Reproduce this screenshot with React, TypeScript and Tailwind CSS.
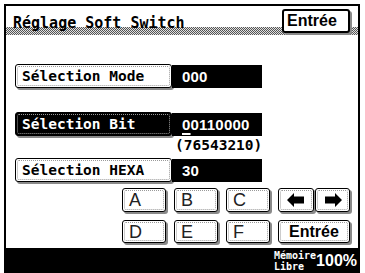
import type { ReactNode } from 'react';
import clsx from 'clsx';

const mono = "font-['DejaVu_Sans_Mono','Liberation_Mono',monospace]";
const sans = "font-['Liberation_Sans',Arial,sans-serif]";

interface KeyProps {
  children?: ReactNode;
  className?: string;
  dark?: boolean;
  inner?: string;
}

// panel key: black outline, dotted inner edge, grey drop shadow
function Key({ children, className, dark, inner }: KeyProps) {
  return (
    <div
      className={clsx(
        'border border-black rounded-[3px] shadow-[2px_2px_0_#8a8a8a] p-[1px] shrink-0',
        dark ? 'bg-black text-white' : 'bg-white text-black',
        className
      )}
    >
      <div
        className={clsx(
          'h-full w-full border border-dotted border-[#9a9a9a] rounded-[2px] flex items-center',
          inner
        )}
      >
        {children}
      </div>
    </div>
  );
}

function Arrow({ dir }: { dir: 'left' | 'right' }) {
  return (
    <svg width="18" height="14" viewBox="0 0 18 14">
      {dir === 'left' ? (
        <polygon points="0,7 7,0 7,3.5 17,3.5 17,10.5 7,10.5 7,14" fill="#000" />
      ) : (
        <polygon points="18,7 11,0 11,3.5 1,3.5 1,10.5 11,10.5 11,14" fill="#000" />
      )}
    </svg>
  );
}

function Row({ label, value, dark }: { label: string; value: ReactNode; dark?: boolean }) {
  return (
    <div className="flex items-center h-[24px]">
      <Key dark={dark} className="w-[157px] h-[24px]" inner="pl-[4px]">
        <span className={clsx(mono, 'text-[14.5px] font-bold leading-none')}>{label}</span>
      </Key>
      <div className="w-[90px] h-[23px] bg-black text-white flex items-center pl-[10px]">
        <span className={clsx(sans, 'text-[15px] font-bold leading-none tracking-[0.2px]')}>{value}</span>
      </div>
    </div>
  );
}

export default function App() {
  return (
    <div className="w-[365px] h-[273px] bg-white overflow-hidden">
      <div className="ml-[4px] pt-[4px] w-[356px] h-[273px] flex flex-col">
        <div className="h-[269px] border-t-2 border-x-2 border-black flex flex-col">
          {/* Header */}
          <div className="relative h-[21px] pl-[7px] pt-[4px]">
            <span className={clsx(mono, 'text-[15px] font-bold leading-none text-black')}>
              Réglage Soft Switch
            </span>
            <div className="absolute right-[8px] top-[3px] z-10 w-[68px] h-[24px] bg-white border-2 border-black rounded-[3px] shadow-[2px_2px_0_#8a8a8a] flex items-center pl-[3px]">
              <span className={clsx(sans, 'text-[16px] font-bold leading-none')}>Entrée</span>
            </div>
          </div>
          <div className="h-[8px] bg-[repeating-conic-gradient(#555_0_25%,#e0e0e0_0_50%)] bg-[length:2px_2px]" />

          {/* Rows */}
          <div className="pl-[9px] mt-[29px] flex flex-col">
            <Row label="Sélection Mode" value="000" />
            <div className="mt-[24px]">
              <Row
                dark
                label="Sélection Bit"
                value={
                  <>
                    <span className="underline decoration-2 underline-offset-[3px]">0</span>0110000
                  </>
                }
              />
            </div>
            <div className={clsx(mono, 'mt-[2px] ml-[160px] h-[14px] text-[14.5px] font-bold leading-none')}>
              (76543210)
            </div>
            <div className="mt-[6px]">
              <Row label="Sélection HEXA" value="30" />
            </div>

            {/* Keypad */}
            <div className="ml-[107px] mt-[6px] flex gap-[8px]">
              {['A', 'B', 'C'].map((k) => (
                <Key key={k} className="w-[44px] h-[24px]" inner="pl-[4px]">
                  <span className={clsx(sans, 'text-[18px] leading-none text-[#222]')}>{k}</span>
                </Key>
              ))}
              <div className="flex gap-[1px]">
                <Key className="w-[36px] h-[24px]" inner="justify-center">
                  <Arrow dir="left" />
                </Key>
                <Key className="w-[35px] h-[24px]" inner="justify-center">
                  <Arrow dir="right" />
                </Key>
              </div>
            </div>
            <div className="ml-[107px] mt-[8px] flex gap-[8px]">
              {['D', 'E', 'F'].map((k) => (
                <Key key={k} className="w-[44px] h-[23px]" inner="pl-[4px]">
                  <span className={clsx(sans, 'text-[18px] leading-none text-[#222]')}>{k}</span>
                </Key>
              ))}
              <Key className="w-[72px] h-[23px]" inner="justify-center">
                <span className={clsx(sans, 'text-[16px] font-bold leading-none')}>Entrée</span>
              </Key>
            </div>
          </div>

          {/* Status bar */}
          <div className="mt-auto h-[25px] bg-black text-white flex items-center justify-end pr-[1px]">
            <div className={clsx(mono, 'flex flex-col text-[10px] font-bold leading-[11px]')}>
              <span>Mémoire</span>
              <span>Libre</span>
            </div>
            <span className={clsx(sans, 'text-[16px] font-bold leading-none')}>100%</span>
          </div>
        </div>
      </div>
    </div>
  );
}
